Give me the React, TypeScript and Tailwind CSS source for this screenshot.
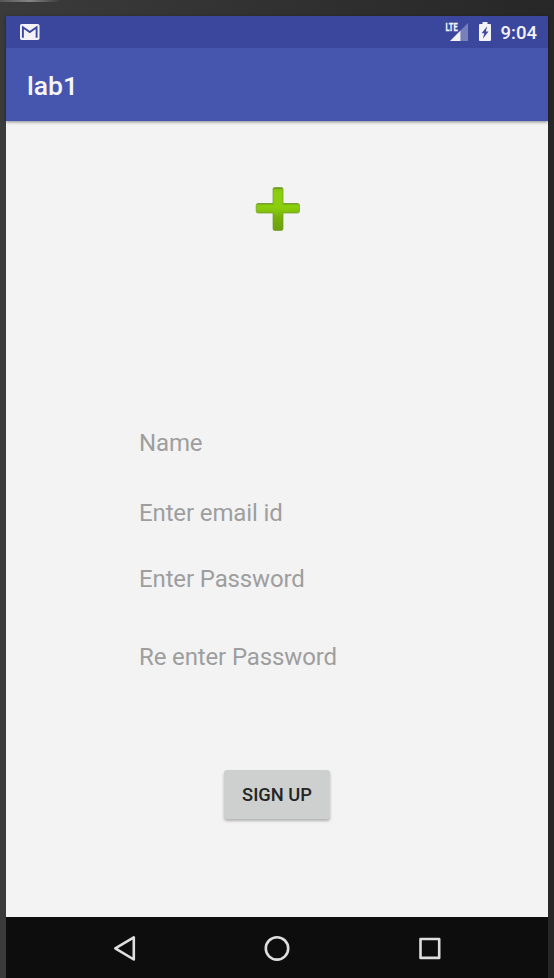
const fields = [
  { label: "Name", gap: "mt-[306px]" },
  { label: "Enter email id", gap: "mt-[38px]" },
  { label: "Enter Password", gap: "mt-[34px]" },
  { label: "Re enter Password", gap: "mt-[46px]" },
];

function MailIcon() {
  return (
    <svg width="20" height="16" viewBox="0 0 20 16">
      <rect width="19.5" height="16" rx="1.8" fill="#f3f3f7" />
      <path d="M2.9 13.7V3.3L9.75 8L16.6 3.3V13.7" fill="none" stroke="#3b479d" strokeWidth="1.9" />
    </svg>
  );
}

function SignalIcon() {
  return (
    <svg className="overflow-visible" width="24" height="26" viewBox="0 -3 24 26">
      <path d="M15.5 8.5L23 1V19H15.5Z" fill="#7780bb" />
      <path d="M5 19L15.5 8.5V19Z" fill="#f3f3f7" />
      <text x="0.6" y="8.8" fill="#f3f3f7" stroke="#f3f3f7" strokeWidth="0.3" fontFamily="Roboto, sans-serif" fontSize="11.5" fontWeight="700" textLength="12" lengthAdjust="spacingAndGlyphs">LTE</text>
    </svg>
  );
}

function BatteryIcon() {
  return (
    <svg width="12" height="19" viewBox="0 0 12 19">
      <path d="M3.5 0H8.5V2H11Q12 2 12 3V18Q12 19 11 19H1Q0 19 0 18V3Q0 2 1 2H3.5Z" fill="#f3f3f7" />
      <path d="M8.2 4.3L2.6 11.2H5.3L3.8 16.8L9.5 9.5H6.8Z" fill="#3b479d" />
    </svg>
  );
}

function PlusIcon() {
  return (
    <svg width="46" height="46" viewBox="0 0 46 46">
      <defs>
        <linearGradient id="green" x1="0" y1="0" x2="0" y2="1">
          <stop offset="0" stopColor="#83bd13" />
          <stop offset="0.12" stopColor="#8bcf12" />
          <stop offset="0.48" stopColor="#8acd0d" />
          <stop offset="0.7" stopColor="#76ae0b" />
          <stop offset="1" stopColor="#6d9f12" />
        </linearGradient>
      </defs>
      <path
        d="M19.5 1.5H26.5Q28 1.5 28 3V17.5H42.5Q44.5 17.5 44.5 19V25Q44.5 27 42.5 27H28V42.5Q28 44.5 26.5 44.5H19.5Q18 44.5 18 42.5V27H3Q1.2 27 1.2 25V19Q1.2 17.5 3 17.5H18V3Q18 1.5 19.5 1.5Z"
        fill="url(#green)"
        stroke="#719d25"
        strokeOpacity="0.7"
        strokeWidth="1"
      />
      <path d="M19 2.5H27M2.5 18H18M28 18H43" stroke="#5b842b" strokeOpacity="0.65" strokeWidth="1" />
    </svg>
  );
}

export default function App() {
  return (
    <div className="flex h-[978px] w-[554px] flex-col bg-linear-to-r from-[#3b3b3b] to-[#272727] px-1.5 font-[Roboto,sans-serif]">
      <div className="-ml-1.5 h-4 shrink-0">
        <div className="h-0.5 w-[60px] bg-linear-to-r from-[#555] via-[#858585] to-[#3b3b3b]" />
      </div>
      <header className="z-10 shrink-0 bg-[#4656af] shadow-[0_1px_3px_rgba(0,0,0,0.45)]">
        <div className="flex h-8 items-center bg-[#3b479d] pr-[11px] pl-[14px]">
          <MailIcon />
          <div className="ml-auto flex h-8 items-center">
            <SignalIcon />
            <div className="mb-px ml-[10px]"><BatteryIcon /></div>
            <span className="ml-[10px] pt-px text-[18.5px] leading-8 font-medium text-[#f3f3f7]">9:04</span>
          </div>
        </div>
        <h1 className="h-[73px] pt-[5px] pl-[21px] text-[26.5px] leading-[66px] font-medium text-[#f5f5f8]">lab1</h1>
      </header>
      <main className="relative flex h-[796px] shrink-0 flex-col bg-[#f3f3f3]">
        <div className="absolute top-[65px] left-[249px]">
          <PlusIcon />
        </div>
        {fields.map((field) => (
          <div key={field.label} className={`ml-[133px] h-8 w-[220px] text-[24px] leading-8 tracking-[-0.13px] whitespace-nowrap text-[#9e9e9e] ${field.gap}`}>
            {field.label}
          </div>
        ))}
        <button className="mt-[97px] ml-[218px] h-[49px] w-[106px] rounded-[3px] bg-[#ced0cf] text-[18.3px] font-medium whitespace-nowrap text-[#242525] shadow-[0_2px_3px_rgba(0,0,0,0.28)]">
          SIGN UP
        </button>
      </main>
      <nav className="flex h-[61px] items-center bg-[#0d0d0d] pl-[106px]">
        <svg width="24" height="28" viewBox="0 0 24 28" fill="none" stroke="#dedede" strokeWidth="2.6" strokeLinejoin="round">
          <path d="M21.8 3.4V25.5L3.3 14.4Z" />
        </svg>
        <svg className="ml-[127px]" width="28" height="28" viewBox="0 0 28 28" fill="none" stroke="#dedede" strokeWidth="2.6">
          <circle cx="14" cy="14.4" r="11.2" />
        </svg>
        <svg className="ml-[125px]" width="28" height="28" viewBox="0 0 28 28" fill="none" stroke="#dedede" strokeWidth="2.6" strokeLinejoin="round">
          <path d="M4.5 5H23.2V23.9H4.5Z" />
        </svg>
      </nav>
    </div>
  );
}
